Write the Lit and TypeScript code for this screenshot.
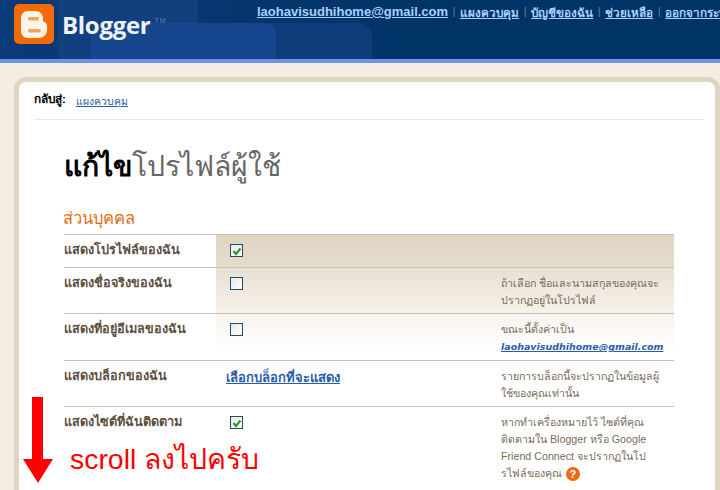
import { LitElement, html, css, svg } from "lit";
import { customElement } from "lit/decorators.js";

const check = svg`<path d="M2.5 6 L5 9 L9.5 3.5" fill="none" stroke="#2e9a2e" stroke-width="2.2"/>`;

@customElement("app-root")
export class AppRoot extends LitElement {
  static styles = css`
    :host { display: block; width: 720px; height: 490px; overflow: hidden; background: #f5ede3; font-family: "Liberation Sans", "Noto Sans", Tahoma, sans-serif; position: relative; }
    .header { height: 59px; background: linear-gradient(90deg, #0b3a78 0, #003366 60%); border-bottom: 4px solid #6b93e6; position: relative; overflow: hidden; display: flex; }
    .blob1 { position: absolute; left: 58px; top: -20px; width: 140px; height: 90px; background: #11407f; border-radius: 14px; }
    .blob2 { position: absolute; left: 91px; top: 23px; width: 185px; height: 60px; background: #16478e; border-radius: 12px; }
    .blob3 { position: absolute; left: 198px; top: 23px; width: 174px; height: 60px; background: #0e3d7c; border-radius: 14px; }
    .brand { position: relative; width: 243px; flex: none; box-sizing: content-box; display: flex; align-items: flex-start; padding: 4px 0 0 14px; gap: 8px; }
    .logo { width: 40px; height: 40px; display: block; }
    .word { font: bold 24px/1 "Open Sans", "Noto Sans", sans-serif; color: #eef2f8; margin-top: 9px; letter-spacing: -0.3px; }
    .tm { font: 7px "Liberation Sans", sans-serif; color: #5e7fae; margin: 0 0 0 -4px; letter-spacing: 1px; padding-top: 13px; }
    .nav { position: relative; display: flex; gap: 4.5px; padding-top: 4px; white-space: nowrap; font-size: 11.7px; font-weight: bold; color: #a8c8ff; }
    .nav a { color: #a8d0ff; text-decoration: underline; }
    .nav .sep { color: #5c7fae; font-weight: normal; }
    .nav .mail { font-size: 13px; }
    .card { margin: 14px 0 0 14px; border: 5px solid #e0d5c3; border-radius: 12px 12px 0 0; background: #fff; height: 420px; padding: 0 0 0 15px; box-sizing: border-box; }
    .crumb { width: 669px; height: 38px; box-sizing: border-box; padding-top: 11px; border-bottom: 1px solid #ebe6dc; font-size: 10.4px; display: flex; gap: 10px; }
    .crumb b { color: #000; font-size: 11.8px; line-height: 14px; margin-top: -1px; }
    .crumb a { color: #2a5da8; text-decoration: underline; }
    h1 { margin: 27px 0 0 30px; font-size: 28.4px; line-height: 38px; font-weight: normal; color: #666; }
    h1 b { color: #000; }
    h2 { margin: 22px 0 5px 29px; font-size: 16.5px; line-height: 22px; font-weight: normal; color: #e06d14; height: 22px; }
    .rows { margin-left: 30px; width: 610px; display: grid; grid-template-columns: 152px 285px 173px; }
    .cell { border-top: 1px solid #c9bfb0; box-sizing: border-box; }
    .label { font-size: 12.7px; font-weight: bold; color: #5c4f3f; padding-top: 7px; line-height: 16px; }
    .ctl { padding: 9px 0 0 14px; }
    .desc { font-size: 10.7px; line-height: 17px; color: #7a6b5a; padding-top: 7px; white-space: nowrap; }
    .desc a { display: block; color: #2a5da8; font: italic bold 9.5px/17px "DejaVu Sans", sans-serif; text-decoration: underline; }
    .box { width: 13px; height: 13px; box-sizing: border-box; border: 1px solid #234a68; background: linear-gradient(135deg, #e8e8e4, #fff); display: block; }
    .pick { color: #2a5da8; font-size: 13px; font-weight: bold; text-decoration: underline; display: block; margin: -3px 0 0 -4px; }
    .g1 { background: linear-gradient(#e0d5c3, #e6dccc); }
    .g2 { background: linear-gradient(#e9e0d3, #f6f1ea); }
    .g3 { background: linear-gradient(#f7f3ee, #fff 80%); }
    .q { display: inline-block; vertical-align: middle; width: 14px; height: 14px; border-radius: 50%; background: #ec6a10; color: #fff; font: bold 11px/14px "Liberation Sans", sans-serif; text-align: center; margin-left: 1px; }
    .arrow { position: absolute; left: 22px; top: 397px; width: 32px; height: 86px; display: block; }
    .note { position: absolute; left: 70px; top: 440px; font-size: 28.4px; line-height: 38px; color: #f00; white-space: nowrap; }
    .row-a { height: 33px; } .row-b { height: 46px; } .row-c { height: 47px; } .row-d { height: 46px; } .row-e { height: 90px; }
  `;

  box(on: boolean) {
    return html`<svg class="box" viewBox="0 0 11 11">${on ? check : ""}</svg>`;
  }

  render() {
    return html`
      <div class="header">
        <div class="blob3"></div><div class="blob1"></div><div class="blob2"></div>
        <div class="brand">
          <svg class="logo" viewBox="0 0 40 40">
            <rect width="40" height="40" rx="5" fill="#f46b06"/>
            <path d="M14 7 H21 C26 7 29 10 29 15 V17 C31 18 33 19 33 22 V26 C33 31 29 34 24 34 H14 C10 34 7 31 7 27 V14 C7 10 10 7 14 7 Z" fill="#fdf3e6"/>
            <rect x="14" y="13" width="11" height="3.4" rx="1.7" fill="#f2a25c"/>
            <rect x="14" y="25" width="13" height="3.4" rx="1.7" fill="#f2a25c"/>
          </svg>
          <span class="word">Blogger</span><span class="tm">TM</span>
        </div>
        <div class="nav">
          <a class="mail" href="#">laohavisudhihome@gmail.com</a><span class="sep">|</span>
          <a href="#">แผงควบคุม</a><span class="sep">|</span>
          <a href="#">บัญชีของฉัน</a><span class="sep">|</span>
          <a href="#">ช่วยเหลือ</a><span class="sep">|</span>
          <a href="#">ออกจากระบบ</a>
        </div>
      </div>
      <div class="card">
        <div class="crumb"><b>กลับสู่:</b><a href="#">แผงควบคุม</a></div>
        <h1><b>แก้ไข</b>โปรไฟล์ผู้ใช้</h1>
        <h2>ส่วนบุคคล</h2>
        <div class="rows">
          <div class="cell label row-a">แสดงโปรไฟล์ของฉัน</div>
          <div class="cell ctl g1">${this.box(true)}</div>
          <div class="cell g1"></div>

          <div class="cell label row-b">แสดงชื่อจริงของฉัน</div>
          <div class="cell ctl g2">${this.box(false)}</div>
          <div class="cell desc g2">ถ้าเลือก ชื่อและนามสกุลของคุณจะ<br>ปรากฏอยู่ในโปรไฟล์</div>

          <div class="cell label row-c">แสดงที่อยู่อีเมลของฉัน</div>
          <div class="cell ctl g3">${this.box(false)}</div>
          <div class="cell desc g3">ขณะนี้ตั้งค่าเป็น<a href="#">laohavisudhihome@gmail.com</a></div>

          <div class="cell label row-d">แสดงบล็อกของฉัน</div>
          <div class="cell ctl"><a class="pick" href="#">เลือกบล็อกที่จะแสดง</a></div>
          <div class="cell desc">รายการบล็อกนี้จะปรากฏในข้อมูลผู้<br>ใช้ของคุณเท่านั้น</div>

          <div class="cell label row-e">แสดงไซต์ที่ฉันติดตาม</div>
          <div class="cell ctl">${this.box(true)}</div>
          <div class="cell desc">หากทำเครื่องหมายไว้ ไซต์ที่คุณ<br>ติดตามใน Blogger หรือ Google<br>Friend Connect จะปรากฏในโป<br>รไฟล์ของคุณ <span class="q">?</span></div>
        </div>
      </div>
      <svg class="arrow" viewBox="0 0 32 86"><path d="M10 0 H21 V62 H31 L16 86 L1 62 H10 Z" fill="#f00"/></svg>
      <div class="note">scroll ลงไปครับ</div>
    `;
  }
}
